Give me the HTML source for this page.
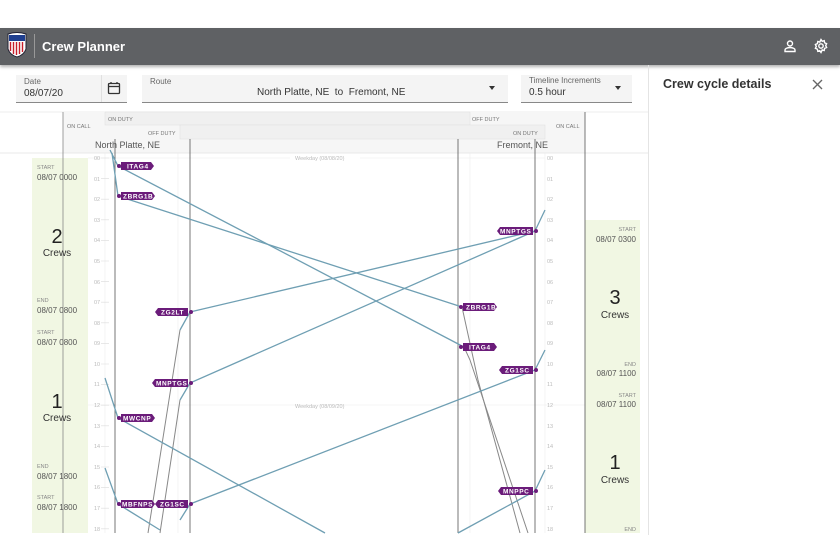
<!DOCTYPE html>
<html><head><meta charset="utf-8"><style>
body{margin:0;width:840px;height:560px;background:#fff;font-family:"Liberation Sans",sans-serif;position:relative;overflow:hidden}
.hdr{position:absolute;left:0;top:28px;width:840px;height:37px;background:#5f6164;box-shadow:0 2px 3px rgba(0,0,0,.3)}
.abs{position:absolute}
.field{position:absolute;background:#f4f4f4;border-bottom:1px solid #888;height:27px}
.lbl{font-size:8px;color:#666}
.val{font-size:10px;color:#333}
.g{color:#888;font-size:6.5px}
.d{color:#555;font-size:8px}
</style></head><body>
<div class="hdr">
 <svg class="abs" style="left:6px;top:4px" width="22" height="26" viewBox="0 0 22 26">
  <path d="M2 2 Q11 -1 20 2 L20 17 Q18 23 11 25 Q4 23 2 17Z" fill="#fff" stroke="#223" stroke-width="1"/>
  <rect x="3" y="3" width="16" height="6" fill="#1f3f8f"/>
  <g stroke="#c8202c" stroke-width="1.4"><line x1="4.5" y1="10" x2="4.5" y2="19"/><line x1="7.5" y1="10" x2="7.5" y2="22"/><line x1="10.5" y1="10" x2="10.5" y2="23"/><line x1="13.5" y1="10" x2="13.5" y2="22"/><line x1="16.5" y1="10" x2="16.5" y2="20"/></g>
 </svg>
 <div class="abs" style="left:34px;top:6px;width:1px;height:24px;background:#999"></div>
 <div class="abs" style="left:42px;top:11px;color:#fff;font-weight:bold;font-size:13px">Crew Planner</div>
 <svg class="abs" style="left:783px;top:11px" width="14" height="14" viewBox="0 0 14 14" fill="none" stroke="#fff" stroke-width="1.4"><circle cx="7" cy="4.5" r="2.5"/><path d="M2 12.5v-1.5q0-2 5-2.5q5 .5 5 2.5v1.5z"/></svg>
 <svg class="abs" style="left:813px;top:10px" width="16" height="16" viewBox="0 0 16 16" fill="none" stroke="#fff" stroke-width="1.4"><circle cx="8" cy="8" r="2.2"/><path d="M8 1.5l1.2 1.8 2-.6.4 2.1 2 .9-.9 1.9.9 1.9-2 .9-.4 2.1-2-.6L8 14.5l-1.2-1.8-2 .6-.4-2.1-2-.9.9-1.9-.9-1.9 2-.9.4-2.1 2 .6z"/></svg>
</div>

<div class="field" style="left:16px;top:75px;width:111px"><div class="abs lbl" style="left:8px;top:2px">Date</div><div class="abs val" style="left:8px;top:13px">08/07/20</div><div class="abs" style="left:85px;top:0;width:1px;height:27px;background:#e0e0e0"></div>
<svg class="abs" style="left:91px;top:6px" width="14" height="14" viewBox="0 0 14 14" fill="none" stroke="#333" stroke-width="1.3"><rect x="1.5" y="2.5" width="11" height="10" rx="1"/><line x1="1.5" y1="5.5" x2="12.5" y2="5.5"/><line x1="4" y1="1" x2="4" y2="3"/><line x1="10" y1="1" x2="10" y2="3"/></svg></div>
<div class="field" style="left:142px;top:75px;width:366px"><div class="abs lbl" style="left:8px;top:2px">Route</div><div class="abs val" style="left:115px;top:12px">North Platte, NE&nbsp; to&nbsp; Fremont, NE</div><div class="abs" style="left:347px;top:11px;border:3.5px solid transparent;border-top:4px solid #333"></div></div>
<div class="field" style="left:521px;top:75px;width:111px"><div class="abs lbl" style="left:8px;top:1px">Timeline Increments</div><div class="abs val" style="left:8px;top:12px">0.5 hour</div><div class="abs" style="left:94px;top:11px;border:3.5px solid transparent;border-top:4px solid #333"></div></div>

<div class="abs" style="left:648px;top:65px;width:1px;height:470px;background:#e4e4e4"></div>
<div class="abs" style="left:663px;top:77px;font-size:12.5px;color:#333;font-weight:bold">Crew cycle details</div>
<svg class="abs" style="left:812px;top:79px" width="11" height="11" viewBox="0 0 11 11" stroke="#666" stroke-width="1.3"><line x1="1" y1="1" x2="10" y2="10"/><line x1="10" y1="1" x2="1" y2="10"/></svg>

<svg class="abs" style="left:0;top:0" width="648" height="560" viewBox="0 0 648 560" font-family="Liberation Sans, sans-serif">
 <line x1="0" y1="112" x2="648" y2="112" stroke="#eee"/>
 <rect x="63" y="112" width="522" height="41" fill="#f6f6f6"/>
 <rect x="105" y="112" width="365" height="13" fill="#f0f0f0" stroke="#e2e2e2" stroke-width=".6"/>
 <rect x="180" y="125" width="365" height="14" fill="#f0f0f0" stroke="#e2e2e2" stroke-width=".6"/>
 <line x1="0" y1="153" x2="648" y2="153" stroke="#e8e8e8"/>
 <g font-size="5.5" fill="#777"><text x="67" y="128">ON CALL</text><text x="108" y="121">ON DUTY</text><text x="148" y="135">OFF DUTY</text><text x="472" y="121">OFF DUTY</text><text x="513" y="135">ON DUTY</text><text x="556" y="128">ON CALL</text></g>
 <text x="95" y="148" font-size="9" fill="#555">North Platte, NE</text>
 <text x="497" y="148" font-size="9" fill="#555">Fremont, NE</text>
 <!-- green panels -->
 <rect x="32" y="158" width="56" height="375" fill="#f1f7e3"/>
 <rect x="585" y="220" width="55" height="313" fill="#f1f7e3"/>
 <!-- grid -->
 <g stroke="#ececec" stroke-width=".6">
  <line x1="88" y1="405" x2="585" y2="405"/><line x1="88" y1="158" x2="290" y2="158"/><line x1="360" y1="158" x2="545" y2="158"/>
  <line x1="105" y1="153" x2="105" y2="533"/><line x1="178" y1="153" x2="178" y2="533"/><line x1="470" y1="153" x2="470" y2="533"/><line x1="545" y1="153" x2="545" y2="533"/>
 </g>
 <text x="295" y="160" font-size="5.5" fill="#bbb">Weekday (08/08/20)</text>
 <text x="295" y="408" font-size="5.5" fill="#bbb">Weekday (08/09/20)</text>
 <g font-size="5.5" fill="#bbb" id="lt">
  <text x="94" y="160">00</text><text x="94" y="181">01</text><text x="94" y="201">02</text><text x="94" y="222">03</text><text x="94" y="242">04</text><text x="94" y="263">05</text><text x="94" y="284">06</text><text x="94" y="304">07</text><text x="94" y="325">08</text><text x="94" y="345">09</text><text x="94" y="366">10</text><text x="94" y="386">11</text><text x="94" y="407">12</text><text x="94" y="428">13</text><text x="94" y="448">14</text><text x="94" y="469">15</text><text x="94" y="489">16</text><text x="94" y="510">17</text><text x="94" y="531">18</text>
 </g>
 <use href="#lt" x="453"/>
 <g stroke="#dcdcdc" stroke-width=".6">
  <path d="M101 158h8M101 178.6h8M101 199.2h8M101 219.8h8M101 240.4h8M101 261h8M101 281.6h8M101 302.2h8M101 322.8h8M101 343.4h8M101 364h8M101 384.6h8M101 405.2h8M101 425.8h8M101 446.4h8M101 467h8M101 487.6h8M101 508.2h8M101 528.8h8"/>
 </g>
 <!-- verticals -->
 <line x1="63" y1="112" x2="63" y2="533" stroke="#888" stroke-width=".8"/>
 <line x1="585" y1="112" x2="585" y2="533" stroke="#555" stroke-width=".8"/>
 <g stroke="#555" stroke-width=".8"><line x1="115" y1="139" x2="115" y2="533"/><line x1="190" y1="139" x2="190" y2="533"/><line x1="458" y1="139" x2="458" y2="533"/><line x1="535" y1="139" x2="535" y2="533"/></g>
 <!-- gray lines -->
 <g stroke="#888" stroke-width="1" fill="none">
  <path d="M180 330L148 533"/><path d="M180 400L160 533"/><path d="M464 347L470 360L528 533"/><path d="M462 307L478 380L520 533"/>
 </g>
 <!-- teal lines -->
 <g stroke="#6f9fb3" stroke-width="1.3" fill="none">
  <path d="M110 150L118 166L464 347"/><path d="M112 153L118 196L462 307"/>
  <path d="M190 312L535 231L545 210"/><path d="M190 383L535 231"/><path d="M190 312L180 330"/><path d="M190 383L180 400"/>
  <path d="M105 378L118 418L325 533"/><path d="M105 468L118 504L160 530"/>
  <path d="M190 504L535 370L545 350"/><path d="M190 504L180 520"/><path d="M458 533L535 491L545 470"/>
 </g>
 <!-- tags -->
 <g fill="#6b1c7a" font-size="6.5" font-weight="bold" letter-spacing=".6">
  <circle cx="119" cy="166" r="2"/><path d="M121 162h30l3 4-3 4h-30z"/><text x="127" y="168.5" fill="#fff">ITAG4</text>
  <circle cx="119" cy="196" r="2"/><path d="M121 192h31l3 4-3 4h-31z"/><text x="123" y="198.5" fill="#fff">ZBRG1B</text>
  <circle cx="191" cy="312" r="2"/><path d="M158 308h30v8h-30l-3-4z"/><text x="161" y="314.5" fill="#fff">ZG2LT</text>
  <circle cx="191" cy="383" r="2"/><path d="M155 379h33v8h-33l-3-4z"/><text x="156" y="385.5" fill="#fff">MNPTGS</text>
  <circle cx="119" cy="418" r="2"/><path d="M121 414h31l3 4-3 4h-31z"/><text x="123" y="420.5" fill="#fff">MWCNP</text>
  <circle cx="119" cy="504" r="2"/><path d="M121 500h31l3 4-3 4h-31z"/><text x="122" y="506.5" fill="#fff">MBFNPS</text>
  <circle cx="191" cy="504" r="2"/><path d="M158 500h30v8h-30l-3-4z"/><text x="160" y="506.5" fill="#fff">ZG1SC</text>
  <circle cx="536" cy="231" r="2"/><path d="M500 227h33v8h-33l-3-4z"/><text x="500" y="233.5" fill="#fff">MNPTGS</text>
  <circle cx="461" cy="307" r="2"/><path d="M463 303h31l3 4-3 4h-31z"/><text x="466" y="309.5" fill="#fff">ZBRG1B</text>
  <circle cx="461" cy="347" r="2"/><path d="M463 343h31l3 4-3 4h-31z"/><text x="469" y="349.5" fill="#fff">ITAG4</text>
  <circle cx="536" cy="370" r="2"/><path d="M502 366h31v8h-31l-3-4z"/><text x="505" y="372.5" fill="#fff">ZG1SC</text>
  <circle cx="536" cy="491" r="2"/><path d="M501 487h32v8h-32l-3-4z"/><text x="503" y="493.5" fill="#fff">MNPPC</text>
 </g>
 <!-- left panel text -->
 <g fill="#888" font-size="5.5"><text x="37" y="169">START</text><text x="37" y="302">END</text><text x="37" y="334">START</text><text x="37" y="468">END</text><text x="37" y="499">START</text></g>
 <g fill="#555" font-size="8"><text x="37" y="180">08/07  0000</text><text x="37" y="313">08/07  0800</text><text x="37" y="345">08/07  0800</text><text x="37" y="479">08/07  1800</text><text x="37" y="510">08/07  1800</text></g>
 <g fill="#222" text-anchor="middle"><text x="57" y="243" font-size="20">2</text><text x="57" y="256" font-size="10" fill="#333">Crews</text><text x="57" y="408" font-size="20">1</text><text x="57" y="421" font-size="10" fill="#333">Crews</text>
 <text x="615" y="304" font-size="20">3</text><text x="615" y="318" font-size="10" fill="#333">Crews</text><text x="615" y="469" font-size="20">1</text><text x="615" y="483" font-size="10" fill="#333">Crews</text></g>
 <g fill="#888" font-size="5.5" text-anchor="end"><text x="636" y="231">START</text><text x="636" y="366">END</text><text x="636" y="397">START</text><text x="636" y="531">END</text></g>
 <g fill="#555" font-size="8" text-anchor="end"><text x="636" y="242">08/07  0300</text><text x="636" y="376">08/07  1100</text><text x="636" y="407">08/07  1100</text></g>
</svg>
</body></html>
